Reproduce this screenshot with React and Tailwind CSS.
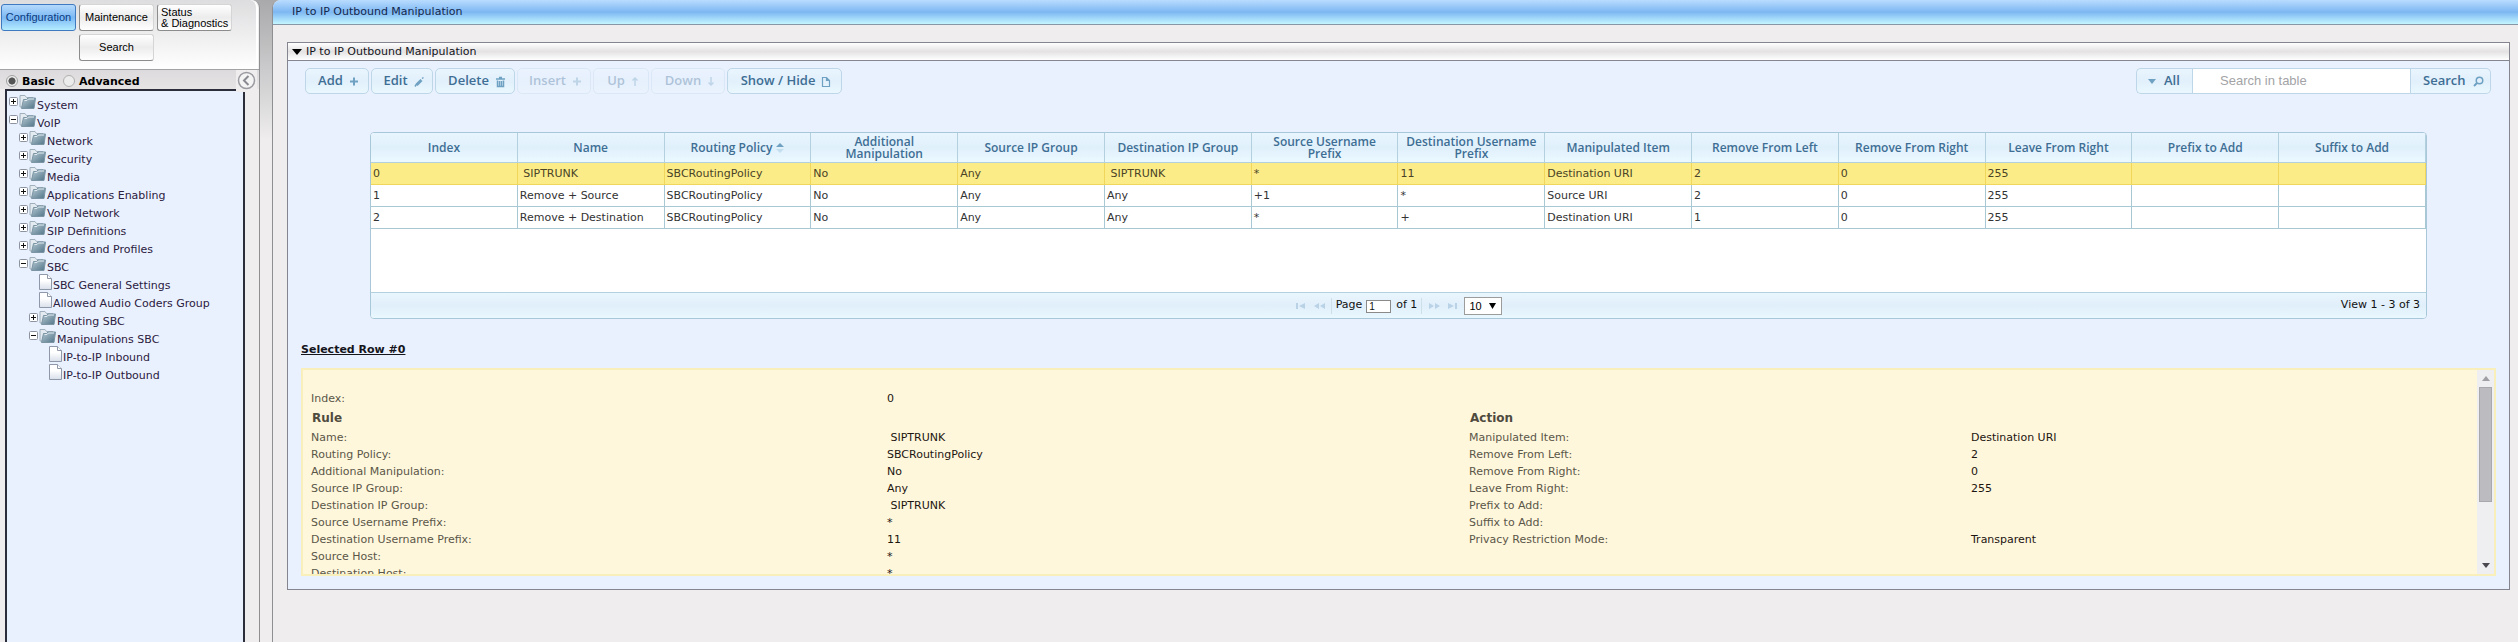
import React, { useState } from 'react';

const columns = [
	'Index', 'Name', 'Routing Policy', 'Additional Manipulation', 'Source IP Group', 'Destination IP Group',
	'Source Username Prefix', 'Destination Username Prefix', 'Manipulated Item', 'Remove From Left',
	'Remove From Right', 'Leave From Right', 'Prefix to Add', 'Suffix to Add',
];

const rows = [
	['0', '\u00a0SIPTRUNK', 'SBCRoutingPolicy', 'No', 'Any', '\u00a0SIPTRUNK', '*', '11', 'Destination URI', '2', '0', '255', '', ''],
	['1', 'Remove + Source', 'SBCRoutingPolicy', 'No', 'Any', 'Any', '+1', '*', 'Source URI', '2', '0', '255', '', ''],
	['2', 'Remove + Destination', 'SBCRoutingPolicy', 'No', 'Any', 'Any', '*', '+', 'Destination URI', '1', '0', '255', '', ''],
];

const rule = [
	['Name:', '\u00a0SIPTRUNK'],
	['Routing Policy:', 'SBCRoutingPolicy'],
	['Additional Manipulation:', 'No'],
	['Source IP Group:', 'Any'],
	['Destination IP Group:', '\u00a0SIPTRUNK'],
	['Source Username Prefix:', '*'],
	['Destination Username Prefix:', '11'],
	['Source Host:', '*'],
	['Destination Host:', '*'],
];

const action = [
	['Manipulated Item:', 'Destination URI'],
	['Remove From Left:', '2'],
	['Remove From Right:', '0'],
	['Leave From Right:', '255'],
	['Prefix to Add:', ''],
	['Suffix to Add:', ''],
	['Privacy Restriction Mode:', 'Transparent'],
];

const tree = [
	{ level: 0, type: 'closed', label: 'System' },
	{ level: 0, type: 'open', label: 'VoIP' },
	{ level: 1, type: 'closed', label: 'Network' },
	{ level: 1, type: 'closed', label: 'Security' },
	{ level: 1, type: 'closed', label: 'Media' },
	{ level: 1, type: 'closed', label: 'Applications Enabling' },
	{ level: 1, type: 'closed', label: 'VoIP Network' },
	{ level: 1, type: 'closed', label: 'SIP Definitions' },
	{ level: 1, type: 'closed', label: 'Coders and Profiles' },
	{ level: 1, type: 'open', label: 'SBC' },
	{ level: 2, type: 'page', label: 'SBC General Settings' },
	{ level: 2, type: 'page', label: 'Allowed Audio Coders Group' },
	{ level: 2, type: 'closed', label: 'Routing SBC' },
	{ level: 2, type: 'open', label: 'Manipulations SBC' },
	{ level: 3, type: 'page', label: 'IP-to-IP Inbound' },
	{ level: 3, type: 'page', label: 'IP-to-IP Outbound' },
];

const indents = ['pl-[2px]', 'pl-[12px]', 'pl-[22px]', 'pl-[32px]'];

const Folder = () => (
	<svg width="17" height="15" viewBox="0 0 17 15">
		<defs>
			<linearGradient id="folder" x1="0" y1="0" x2="1" y2="1">
				<stop offset="0" stopColor="#b9cbd6" />
				<stop offset="1" stopColor="#4f7386" />
			</linearGradient>
		</defs>
		<path d="M1 13V1.500h5l1.500 2H14V13z" fill="#e3eaf0" stroke="#9fb0bc" />
		<path d="M2.500 14.500 4.500 5.500h3L9 4h7.500L15 14.500z" fill="url(#folder)" stroke="#7b95a4" />
		<path d="M5.500 6.500h2.500L9.500 5H15" fill="none" stroke="#dfe9ef" />
	</svg>
);

const Page = () => (
	<svg width="13" height="16" viewBox="0 0 13 16">
		<defs>
			<linearGradient id="page" x1="0" y1="0" x2="0" y2="1">
				<stop offset=".4" stopColor="#fff" />
				<stop offset="1" stopColor="#d8dfea" />
			</linearGradient>
		</defs>
		<path d="M.5 .5h8l4 4v11H.5z" fill="url(#page)" stroke="#8f98a8" />
		<path d="M8.500 .5v4h4" fill="#fff" stroke="#8f98a8" />
	</svg>
);

const Expander = ({ open }) => (
	<button aria-label={open ? 'Collapse' : 'Expand'} className="mt-[3px] h-[9px] w-[9px] shrink-0">
		<svg width="9" height="9" viewBox="0 0 9 9" className="block">
			<rect x=".5" y=".5" width="8" height="8" rx="1" fill="#fff" stroke="#8c93a0" />
			<path d={open ? 'M2 4.500h5' : 'M2 4.500h5M4.500 2v5'} stroke="#111" />
		</svg>
	</button>
);

const TreeItem = ({ item }) => (
	<li className={`flex h-[18px] items-start ${indents[item.level]}`}>
		{item.type === 'page' ? <span className="w-[10px]" /> : <Expander open={item.type === 'open'} />}
		{item.type === 'page' ? <Page /> : <span className="pl-px"><Folder /></span>}
		<a href="#" className="self-end whitespace-nowrap pl-px leading-[12px] text-[#2b2040]">{item.label}</a>
	</li>
);

const navButton = 'flex h-[27px] w-[75px] items-center rounded-[3px] border text-[11px] leading-[11px] ';
const plainNav = 'border-[#d5d5d5] border-b-[#8c8c8c] border-l-[#8c8c8c] bg-linear-to-b from-white via-[#ececec] to-white text-black';
const activeNav = 'border-[#3f7ac0] bg-linear-to-b from-[#b4dafc] via-[#7cb8f3] to-[#b4ecff] text-[#0a3a80]';

const Sidebar = () => {
	const [mode, setMode] = useState('basic');

	return (
		<aside className="flex w-[260px] shrink-0 flex-col rounded-tr-lg border-r border-[#8f8f92] bg-[#efedee]">
			<div className="mr-px flex h-[69px] flex-col gap-[3px] rounded-tr-lg border-r-2 border-white bg-linear-to-b from-[#dddddf] to-white pl-px pt-1 font-['Liberation_Sans',sans-serif]">
				<div className="flex gap-[3px]">
					<button className={navButton + 'justify-center ' + activeNav}>Configuration</button>
					<button className={navButton + 'justify-center ' + plainNav}>Maintenance</button>
					<button className={navButton + 'pl-[3px] text-left ' + plainNav}><span className="whitespace-nowrap">Status<br />&amp; Diagnostics</span></button>
				</div>
				<button className={navButton + 'ml-[78px] justify-center ' + plainNav}>Search</button>
			</div>
			<div className="relative flex h-5 items-center border-t border-[#a3a3a5] bg-linear-to-b from-[#dcdadc] to-[#e6e4e5] pl-[6px] pt-[6px] font-bold">
				<input id="basic" type="radio" name="mode" checked={mode === 'basic'} onChange={() => setMode('basic')}
					className="mb-1 h-3 w-3 appearance-none rounded-full border border-[#a0a0a0] bg-[#ececec] bg-radial checked:from-[#555] checked:from-45% checked:to-[#ececec] checked:to-55%" />
				<label htmlFor="basic" className="w-[45px] pl-1">Basic</label>
				<input id="advanced" type="radio" name="mode" checked={mode === 'advanced'} onChange={() => setMode('advanced')}
					className="mb-1 h-3 w-3 appearance-none rounded-full border border-[#b0b0b0] bg-[#ececec] bg-radial checked:from-[#555] checked:from-45% checked:to-[#ececec] checked:to-55%" />
				<label htmlFor="advanced" className="pl-1">Advanced</label>
				<button aria-label="Hide menu" className="absolute right-[2px] top-0 z-10 h-[22px] w-[21px] bg-[#efedee]">
					<svg width="21" height="22" viewBox="0 0 21 22">
						<circle cx="10.500" cy="10.500" r="8" fill="#f4f4f4" stroke="#9a9aa0" strokeWidth="1.500" />
						<path d="M12.500 6 8 10.500l4.500 4.500" fill="none" stroke="#8a8a92" strokeWidth="2" />
					</svg>
				</button>
			</div>
			<ul className="ml-[5px] w-[240px] grow border-x-2 border-t-2 border-[#2c2d3a] bg-[#eaf1fe] pt-[3px]">
				{tree.map((item) => <TreeItem key={item.label} item={item} />)}
			</ul>
		</aside>
	);
};

const icons = {
	plus: <path d="M5 1.500v8M1 5.500h8" strokeWidth="2" />,
	pencil: <path d="M1 10.500 2.500 8 7 3.500M3 9.500 8 4.500M8 2.500l1.500-1" strokeWidth="1.500" />,
	trash: <path d="M1 3h9M4 1.500h3M2.500 4.500v6h6v-6M4.500 5v5M6.500 5v5" strokeWidth="1.500" />,
	up: <path d="M4 10V2M1.500 4.500 4 2l2.500 2.500" strokeWidth="1.500" />,
	down: <path d="M4 1v8M1.500 6.500 4 9l2.500-2.500" strokeWidth="1.500" />,
	page: <path d="M1.500 1.500h4l3 3v6h-7zM5.500 1.500v3h3" strokeWidth="1.200" />,
};

const ToolButton = ({ label, icon, width, disabled }) => (
	<button disabled={disabled} className={`flex h-[26px] items-center justify-center gap-[6px] rounded-[5px] border border-[#bdd7e8] bg-linear-to-b from-[#eaf5fe] via-[#e1f0fb] to-[#eaf7fe] pl-1 font-['Open_Sans',sans-serif] text-[13px] font-semibold text-[#3e6e94] disabled:opacity-35 ${width}`}>
		{label}
		<svg width={icon === 'up' || icon === 'down' ? 8 : 11} height="12" className="mt-[2px]" fill="none" stroke="#6fa2c2">{icons[icon]}</svg>
	</button>
);

const Toolbar = () => (
	<div className="flex items-start justify-between pl-[17px] pr-[18px]">
		<div className="flex gap-[2px]">
			<ToolButton label="Add" icon="plus" width="w-[64px]" />
			<ToolButton label="Edit" icon="pencil" width="w-[62px]" />
			<ToolButton label="Delete" icon="trash" width="w-[80px]" />
			<ToolButton label="Insert" icon="plus" width="w-[74px]" disabled />
			<ToolButton label="Up" icon="up" width="w-[56px]" disabled />
			<ToolButton label="Down" icon="down" width="w-[74px]" disabled />
			<ToolButton label="Show / Hide" icon="page" width="w-[115px]" />
		</div>
		<form onSubmit={(e) => e.preventDefault()} className="flex h-[26px] font-['Open_Sans',sans-serif] text-[13px] font-semibold text-[#3e6e94]">
			<button type="button" className="flex w-[56px] items-center gap-2 rounded-l-[5px] border border-r-0 border-[#bdd7e8] bg-linear-to-b from-[#eaf5fe] via-[#e1f0fb] to-[#eaf7fe] pl-[11px]">
				<svg width="8" height="5"><path d="M0 0h8L4 5z" fill="#6fa2c2" /></svg>
				All
			</button>
			<input type="text" aria-label="Search in table" placeholder="Search in table"
				className="w-[219px] border border-[#bdd7e8] bg-white pl-[27px] font-['Liberation_Sans',sans-serif] font-normal placeholder:text-[#a3a3a6]" />
			<button className="flex w-[80px] items-center gap-[7px] rounded-r-[5px] border border-l-0 border-[#bdd7e8] bg-linear-to-b from-[#eaf5fe] via-[#e1f0fb] to-[#eaf7fe] pl-3">
				Search
				<svg width="11" height="11" fill="none" stroke="#6fa2c2" strokeWidth="1.500"><circle cx="6.500" cy="4.500" r="3.250" /><path d="M4 7 1 10" strokeWidth="2" /></svg>
			</button>
		</form>
	</div>
);

const PagerButton = ({ label, path }) => (
	<button aria-label={label} disabled className="h-3 w-3">
		<svg width="12" height="12" fill="#b9d2e6"><path d={path} /></svg>
	</button>
);

const Pager = () => (
	<div className="grid h-[26px] grid-cols-3 items-center border-t border-[#b3d0de] bg-linear-to-b from-[#eaf6fd] via-[#e1effb] to-[#e9f7fe] text-[#111]">
		<span />
		<div className="flex items-center justify-center">
			<PagerButton label="First page" path="M1 3h2v6H1zM10 3v6L4 6z" />
			<span className="w-[6px]" />
			<PagerButton label="Previous page" path="M6 3v6L1 6zM12 3v6L7 6z" />
			<span className="ml-[6px] mr-1 h-4 w-px bg-[#cddfe9]" />
			<label htmlFor="page">Page</label>
			<input id="page" type="text" defaultValue="1" className="ml-1 mr-[5px] mt-px h-[13px] w-[25px] border border-[#8a8a8a] bg-white pl-[2px] font-['Liberation_Sans',sans-serif] text-[10px]" />
			<span>of 1</span>
			<span className="ml-1 mr-[6px] h-4 w-px bg-[#cddfe9]" />
			<PagerButton label="Next page" path="M1 3v6l5-3zM7 3v6l5-3z" />
			<span className="w-[6px]" />
			<PagerButton label="Last page" path="M2 3v6l6-3zM9 3h2v6H9z" />
			<div className="relative ml-[6px]">
				<select aria-label="Rows per page" className="block h-[18px] w-[38px] appearance-none border border-[#9c9c9c] bg-white pl-1 font-['Liberation_Sans',sans-serif] text-[11px] leading-4 text-black">
					<option>10</option>
					<option>20</option>
				</select>
				<svg width="7" height="6" className="pointer-events-none absolute right-[6px] top-[6px]"><path d="M0 0h7L3.500 6z" fill="#000" /></svg>
			</div>
		</div>
		<span className="pr-[6px] text-right">View 1 - 3 of 3</span>
	</div>
);

const RulesTable = () => (
	<div className="mx-[82px] mt-[38px] overflow-hidden rounded-[4px] border border-[#a8c8da] bg-white">
		<table className="w-full table-fixed border-separate border-spacing-0 text-[#333]">
			<thead>
				<tr className="h-[30px] bg-linear-to-b from-[#e8f5fe] via-[#e0f0fb] to-[#ecf9ff]">
					{columns.map((name) => (
						<th key={name} className="border-b border-r border-[#b3d0de] px-[2px] font-['Open_Sans',sans-serif] text-[12px] font-semibold leading-[12px] text-[#3e6e94]">
							{name === 'Additional Manipulation' ? <>Additional<br />Manipulation</> : name.replace(/ Prefix$/, '')}
							{name.endsWith(' Prefix') && <><br />Prefix</>}
							{name === 'Routing Policy' && (
								<svg width="8" height="10" className="ml-1 inline"><path d="M0 4h8L4 0z" fill="#6fa2c2" /><path d="M0 6h8l-4 4z" fill="#c3deef" /></svg>
							)}
						</th>
					))}
				</tr>
			</thead>
			<tbody>
				{rows.map((row, i) => (
					<tr key={row[0]} className={i === 0 ? 'h-[22px] bg-[#fbec88] text-[#4a4326]' : 'h-[22px]'}>
						{row.map((cell, j) => (
							<td key={j} className={`whitespace-nowrap border-b border-r pl-[2px] pt-px ${i === 0 ? 'border-[#f0d65a]' : 'border-[#a8c8d3]'}`}>{cell}</td>
						))}
					</tr>
				))}
			</tbody>
		</table>
		<div className="h-[63px]" />
		<Pager />
	</div>
);

const Field = ({ label, value }) => (
	<>
		<dt className="text-[#5a5648]">{label}</dt>
		<dd className="text-[#1c1510]">{value}</dd>
	</>
);

const SelectedRow = () => (
	<section className="mx-[13px] mt-[23px]">
		<h2 className="font-bold leading-4 text-[#15151c] underline">Selected Row #0</h2>
		<div className="mt-[10px] flex h-[208px] border-2 border-[#f9efbb] bg-[#fff7dc]">
			<div className="grow overflow-hidden pl-2 pt-5 leading-[17px]">
				<dl className="grid grid-cols-[576fr_1590fr]">
					<Field label="Index:" value="0" />
				</dl>
				<div className="grid grid-cols-[1158fr_1008fr]">
					<div>
						<h3 className="pl-px text-[12px] font-bold leading-[22px] text-[#4f4b3e]">Rule</h3>
						<dl className="grid grid-cols-[576fr_582fr]">
							{rule.map(([label, value]) => <Field key={label} label={label} value={value} />)}
						</dl>
					</div>
					<div>
						<h3 className="pl-px text-[12px] font-bold leading-[22px] text-[#4f4b3e]">Action</h3>
						<dl className="grid auto-rows-[17px] grid-cols-[502fr_506fr]">
							{action.map(([label, value]) => <Field key={label} label={label} value={value} />)}
						</dl>
					</div>
				</div>
			</div>
			<div className="flex w-[17px] shrink-0 flex-col items-center bg-[#efeef0]">
				<button aria-label="Scroll up" className="flex h-[17px] w-full items-center justify-center">
					<svg width="8" height="5"><path d="M0 5h8L4 0z" fill="#a09fa3" /></svg>
				</button>
				<div className="h-[115px] w-[13px] border border-[#a9a8ac] bg-[#bcbbbf]" />
				<button aria-label="Scroll down" className="mt-auto flex h-[17px] w-full items-center justify-center">
					<svg width="8" height="5"><path d="M0 0h8L4 5z" fill="#4a494f" /></svg>
				</button>
			</div>
		</div>
	</section>
);

const App = () => {
	return (
		<div className="flex min-h-screen bg-[#efedee] bg-linear-to-b from-[#a9a9ab] to-[#efedee] to-[140px] font-['DejaVu_Sans',sans-serif] text-[11px]">
			<Sidebar />
			<main className="ml-3 min-w-0 grow rounded-tl-lg border-l border-[#8f8f92] bg-[#efedee]">
				<h1 className="h-[25px] rounded-tl-lg border-b border-[#8797a8] bg-linear-to-b from-[#b9dcff] from-0% via-[#7db7f2] via-50% to-[#c4f5ff] to-100% pl-[19px] leading-[23px] text-[#14284c]">IP to IP Outbound Manipulation</h1>
				<div className="ml-[14px] mr-2 mt-[17px] border border-[#85858f] bg-[#eaf1fe] pb-[13px]">
					<div className="flex h-[18px] items-center gap-1 border-b border-[#85858f] bg-linear-to-b from-white via-[#e4e2e3] to-white pl-1 pt-px text-[#14141c]">
						<svg width="10" height="6"><path d="M0 0h10L5 6z" fill="#000" /></svg>
						IP to IP Outbound Manipulation
					</div>
					<div className="pt-[7px]">
						<Toolbar />
						<RulesTable />
						<SelectedRow />
					</div>
				</div>
			</main>
		</div>
	);
};

export default App;
